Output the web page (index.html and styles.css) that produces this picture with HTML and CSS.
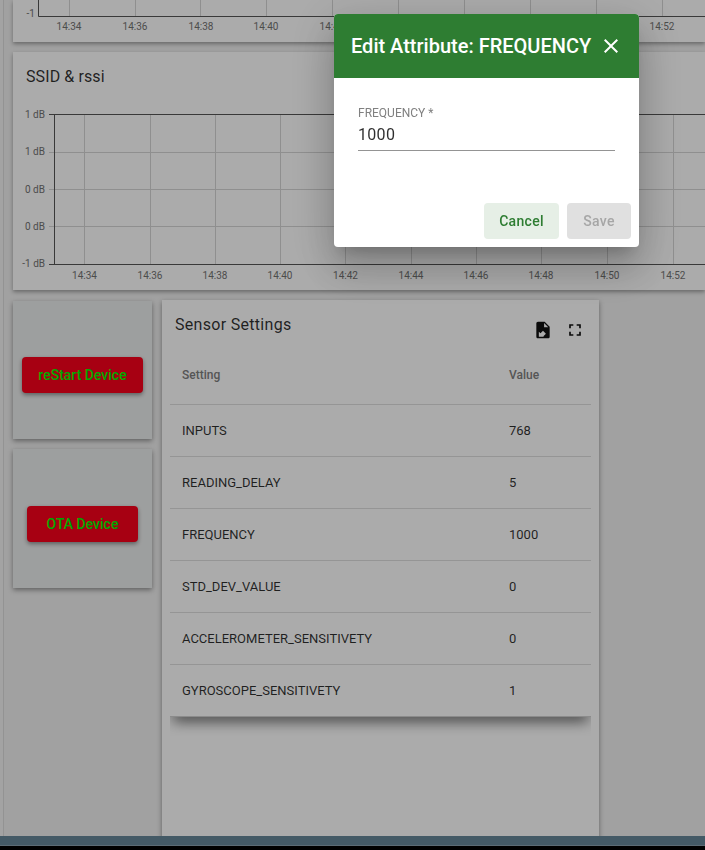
FILE: index.html
```html
<!DOCTYPE html>
<html lang="en">
<head>
<meta charset="utf-8">
<title>Device</title>
<link rel="stylesheet" href="styles.css">
</head>
<body>
<div class="page">
  <aside class="rail"></aside>
  <main class="content">
    <section class="card chart-top">
      <svg class="chart" width="692" height="42" viewBox="0 0 692 42">
        <g class="grid">
          <path d="M56.500 0V16M122.500 0V16M187.500 0V16M253.500 0V16M319.500 0V16M385.500 0V16M451.500 0V16M517.500 0V16M583.500 0V16M649.500 0V16"/>
        </g>
        <path class="axis" d="M25.500 0V16.500H692"/>
        <text class="tick" x="22" y="17" text-anchor="end">-1</text>
        <g class="tick" text-anchor="middle">
          <text x="56" y="30">14:34</text><text x="122" y="30">14:36</text><text x="188" y="30">14:38</text><text x="253" y="30">14:40</text><text x="319" y="30">14:42</text><text x="649" y="30">14:52</text>
        </g>
      </svg>
    </section>
    <section class="card chart-main">
      <h2 class="card-title">SSID &amp; rssi</h2>
      <svg class="chart" width="692" height="238" viewBox="0 0 692 238">
        <g class="grid">
          <path d="M71.500 62V212M137.500 62V212M202.500 62V212M267.500 62V212M332.500 62V212M398.500 62V212M463.500 62V212M528.500 62V212M594.500 62V212M660.500 62V212"/>
          <path d="M36 100.500H692M36 137.500H692M36 174.500H692"/>
        </g>
        <path class="axis" d="M36 62.500H692M41.500 62V212.500M36 212.500H692"/>
        <g class="tick" text-anchor="end">
          <text x="32" y="66">1 dB</text><text x="32" y="103">1 dB</text><text x="32" y="141">0 dB</text><text x="32" y="178">0 dB</text><text x="32" y="215">-1 dB</text>
        </g>
        <g class="tick" text-anchor="middle">
          <text x="71.500" y="227">14:34</text><text x="137" y="227">14:36</text><text x="202" y="227">14:38</text><text x="267" y="227">14:40</text><text x="332.500" y="227">14:42</text><text x="398" y="227">14:44</text><text x="463" y="227">14:46</text><text x="528" y="227">14:48</text><text x="594" y="227">14:50</text><text x="660" y="227">14:52</text>
        </g>
      </svg>
    </section>
    <div class="lower">
      <div class="actions">
        <div class="action-card action-restart"><button class="danger danger-wide">reStart Device</button></div>
        <div class="action-card action-ota"><button class="danger danger-narrow">OTA Device</button></div>
      </div>
      <section class="settings">
        <header class="settings-head">
          <h2 class="settings-title">Sensor Settings</h2>
          <div class="tools">
            <svg class="tool-icon" width="20" height="20" viewBox="0 0 24 24"><path d="M14 2H6c-1.100 0-2 .9-2 2v16c0 1.100.9 2 2 2h12c1.100 0 2-.9 2-2V8l-6-6zm-.7 1.700L18.300 8.700h-5V3.700z"/><path class="arrow" d="M7 20v-6l2 2 3-3 3.500 3.500-3 3 .5.500z"/></svg>
            <svg class="tool-icon" width="20" height="20" viewBox="0 0 24 24"><path d="M7 14H5v5h5v-2H7v-3zm-2-4h2V7h3V5H5v5zm12 7h-3v2h5v-5h-2v3zM14 5v2h3v3h2V5h-5z"/></svg>
          </div>
        </header>
        <table class="table">
          <thead><tr><th>Setting</th><th>Value</th></tr></thead>
          <tbody>
            <tr><td>INPUTS</td><td>768</td></tr>
            <tr><td>READING_DELAY</td><td>5</td></tr>
            <tr><td>FREQUENCY</td><td>1000</td></tr>
            <tr><td>STD_DEV_VALUE</td><td>0</td></tr>
            <tr><td>ACCELEROMETER_SENSITIVETY</td><td>0</td></tr>
            <tr><td>GYROSCOPE_SENSITIVETY</td><td>1</td></tr>
          </tbody>
        </table>
        <div class="table-shade"></div>
      </section>
    </div>
  </main>
  <footer class="bottom-bar"></footer>
  <div class="black-bar"></div>
</div>
<div class="backdrop"></div>
<div class="dialog">
  <header class="dialog-head">
    <h1 class="dialog-title">Edit Attribute: FREQUENCY</h1>
    <svg class="close" width="24" height="24" viewBox="0 0 24 24"><path d="M19 6.410 17.590 5 12 10.590 6.410 5 5 6.410 10.590 12 5 17.590 6.410 19 12 13.410 17.590 19 19 17.590 13.410 12z"/></svg>
  </header>
  <div class="dialog-body">
    <label class="field-label">FREQUENCY *</label>
    <div class="field-value">1000</div>
  </div>
  <div class="dialog-actions">
    <button class="btn-cancel">Cancel</button>
    <button class="btn-save">Save</button>
  </div>
</div>
</body>
</html>
```
FILE: styles.css
```css
* { box-sizing: border-box; }
html, body { margin: 0; height: 100%; overflow: hidden; }
body { font-family: Roboto, "Liberation Sans", sans-serif; background: #f0f0f0; color: rgba(0,0,0,.82); }
.page { width: 705px; height: 850px; display: grid; grid-template-columns: 13px 692px; grid-template-rows: 836px 10px 4px; overflow: hidden; }
.rail { background: linear-gradient(90deg, #f3f3f3 0 3px, #dcdcdc 3px 4px, #f0f0f0 4px); }
.content { display: flex; flex-direction: column; min-width: 0; }
.card { background: #fff; box-shadow: 0 2px 4px rgba(0,0,0,.35); flex: none; }
.chart-top { height: 42px; }
.chart-main { height: 238px; margin-top: 10px; position: relative; }
.chart { display: block; }
.chart-main .chart { position: absolute; left: 0; top: 0; }
.card-title { margin: 0; padding: 15px 13px; font-size: 16px; font-weight: 400; line-height: 20px; letter-spacing: .1px; }
.grid path { stroke: #d6d6d6; stroke-width: 1; fill: none; }
.axis { stroke: #555; stroke-width: 1; fill: none; }
.tick, .tick text { font-family: Roboto, sans-serif; font-size: 10px; fill: #737373; }
.lower { display: flex; gap: 10px; margin-top: 10px; flex: 1; min-height: 0; align-items: flex-start; }
.actions { display: flex; flex-direction: column; gap: 10px; width: 139px; flex: none; margin-top: 1px; }
.action-card { background: #ebeded; box-shadow: 0 2px 5px rgba(0,0,0,.4); display: flex; align-items: center; justify-content: center; }
.action-restart { height: 138px; padding-top: 10px; }
.action-ota { height: 139px; padding-top: 11px; }
.danger { height: 36px; padding: 1px 0 0; border: 0; border-radius: 4px; background: #fa001b; color: #00fb00; font: 500 14px/35px Roboto, sans-serif; box-shadow: 0 2px 4px rgba(0,0,0,.4); }
.danger-wide { width: 121px; }
.danger-narrow { width: 111px; }
.settings { width: 437px; height: 560px; background: #fff; box-shadow: 0 2px 5px rgba(0,0,0,.4); padding: 0 8px; }
.settings-head { display: flex; justify-content: space-between; align-items: flex-start; height: 56px; padding: 15px 6px 0 5px; }
.settings-title { margin: 0; font-size: 16px; font-weight: 400; line-height: 20px; letter-spacing: .3px; }
.tools { display: flex; gap: 12px; margin-top: 5px; }
.tool-icon { fill: #111; display: block; }
.tool-icon .arrow { fill: #fff; }
.table { width: 421px; border-collapse: collapse; table-layout: fixed; font-size: 13px; }
.table th, .table td { padding: 0 12px; text-align: left; border-bottom: 1px solid #dfdfdf; }
.table th { height: 48px; padding-bottom: 9px; font-weight: 500; color: #7f7f7f; font-size: 12px; }
.table td { height: 52px; }
.table tr:last-child td { border-bottom: 0; }
.table th:first-child, .table td:first-child { width: 327px; }
.table-shade { position: relative; height: 20px; overflow: hidden; border-top: 1px solid #d0d0d0; }
.table-shade::before { content: ""; position: absolute; left: 3px; right: 3px; top: -12px; height: 12px; box-shadow: 0 4px 14px rgba(0,0,0,.65); }
.bottom-bar { grid-column: 1 / -1; background: #668699; border-bottom: 1px solid #8aa0ad; }
.black-bar { grid-column: 1 / -1; background: #000; }
.backdrop { position: fixed; inset: 0; background: rgba(0,0,0,.33); }
.dialog { position: fixed; left: 334px; top: 14px; width: 305px; height: 233px; background: #fff; border-radius: 4px; overflow: hidden; box-shadow: 0 11px 15px -7px rgba(0,0,0,.2), 0 24px 38px 3px rgba(0,0,0,.14), 0 9px 46px 8px rgba(0,0,0,.12); display: flex; flex-direction: column; }
.dialog-head { height: 64px; background: #2e7d32; color: #fff; display: flex; align-items: center; justify-content: space-between; padding: 0 16px 0 17px; flex: none; }
.dialog-title { margin: 0; font-size: 20px; font-weight: 500; line-height: 28px; white-space: nowrap; }
.close { fill: #fff; flex: none; }
.dialog-body { flex: 1; padding: 28px 24px 0; }
.field-label { display: block; font-size: 12px; line-height: 14px; color: #808080; }
.field-value { margin-top: 3px; height: 28px; line-height: 24px; font-size: 16px; border-bottom: 1px solid #949494; letter-spacing: .3px; }
.dialog-actions { display: flex; justify-content: flex-end; gap: 8px; padding: 0 8px 8px; }
.dialog-actions button { height: 36px; border: 0; border-radius: 4px; font: 500 14px/36px Roboto, sans-serif; letter-spacing: .3px; padding: 0; }
.btn-cancel { width: 75px; background: #e6efe6; color: #2e7d32; }
.btn-save { width: 64px; background: #e0e0e0; color: #a6a6a6; }
```
